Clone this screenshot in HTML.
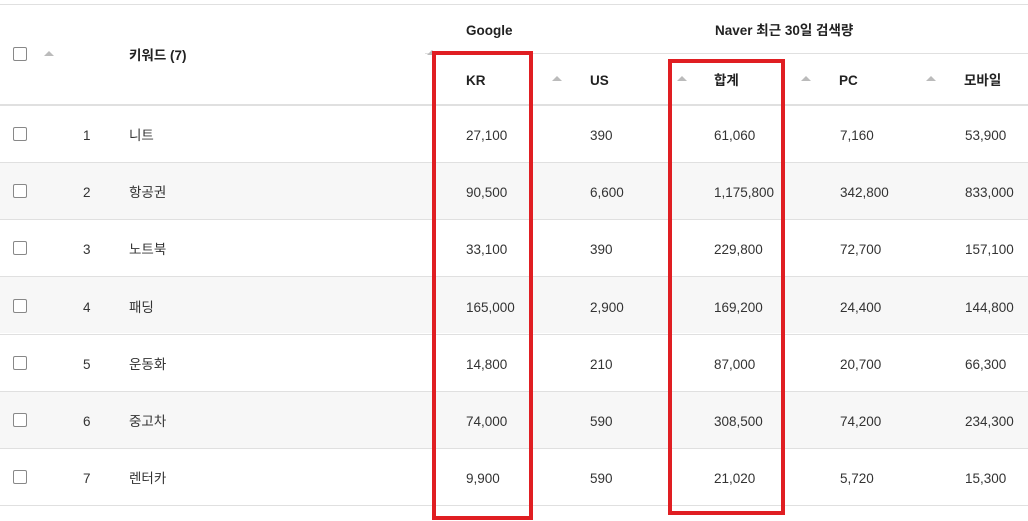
<!DOCTYPE html>
<html><head><meta charset="utf-8"><style>
body{margin:0;width:1028px;height:521px;background:#fff;position:relative;overflow:hidden;font-family:"Liberation Sans","Noto Sans CJK KR",sans-serif;color:#333;font-size:13.5px}
.a{position:absolute;white-space:nowrap;line-height:16px;height:16px;margin-top:1.5px}
.l{position:absolute;left:0;width:1028px;height:1px;background:#e0e0e0}
.sh{position:absolute;left:0;width:1028px;height:56px;background:#f7f7f7}
.cb{position:absolute;left:13px;width:12px;height:12px;border:1px solid #888;border-radius:2px;background:#fff}
.b{font-weight:bold;color:#222}
.ar{position:absolute;width:0;height:0;border-left:5px solid transparent;border-right:5px solid transparent;border-bottom:5px solid #bbb}
.red{position:absolute;border:4px solid #e01e22;box-sizing:border-box}
</style></head><body>
<div class="l" style="top:4px"></div>
<div class="l" style="top:53px;left:425px;width:603px"></div>
<div class="l" style="top:104px;height:2px"></div>
<div class="sh" style="top:163px"></div>
<div class="sh" style="top:277px"></div>
<div class="sh" style="top:392px"></div>
<div class="l" style="top:162px"></div>
<div class="l" style="top:219px"></div>
<div class="l" style="top:276px"></div>
<div class="l" style="top:334px"></div>
<div class="l" style="top:391px"></div>
<div class="l" style="top:448px"></div>
<div class="l" style="top:505px"></div>

<div class="cb" style="top:47px"></div>
<div class="ar" style="left:44px;top:51px"></div>
<div class="a b" style="left:129px;top:46px">키워드 (7)</div>
<div class="ar" style="left:427px;top:50px"></div>
<div class="a b" style="left:466px;top:21px">Google</div>
<div class="a b" style="left:715px;top:21px">Naver 최근 30일 검색량</div>
<div class="a b" style="left:466px;top:71px">KR</div>
<div class="ar" style="left:552px;top:76px"></div>
<div class="a b" style="left:590px;top:71px">US</div>
<div class="ar" style="left:677px;top:76px"></div>
<div class="a b" style="left:714px;top:71px">합계</div>
<div class="ar" style="left:801px;top:76px"></div>
<div class="a b" style="left:839px;top:71px">PC</div>
<div class="ar" style="left:926px;top:76px"></div>
<div class="a b" style="left:964px;top:71px">모바일</div>

<div class="cb" style="top:127px"></div><div class="a" style="left:83px;top:126px">1</div><div class="a" style="left:129px;top:126px">니트</div><div class="a" style="left:466px;top:126px">27,100</div><div class="a" style="left:590px;top:126px">390</div><div class="a" style="left:714px;top:126px">61,060</div><div class="a" style="left:840px;top:126px">7,160</div><div class="a" style="left:965px;top:126px">53,900</div>
<div class="cb" style="top:184px"></div><div class="a" style="left:83px;top:183px">2</div><div class="a" style="left:129px;top:183px">항공권</div><div class="a" style="left:466px;top:183px">90,500</div><div class="a" style="left:590px;top:183px">6,600</div><div class="a" style="left:714px;top:183px">1,175,800</div><div class="a" style="left:840px;top:183px">342,800</div><div class="a" style="left:965px;top:183px">833,000</div>
<div class="cb" style="top:241px"></div><div class="a" style="left:83px;top:240px">3</div><div class="a" style="left:129px;top:240px">노트북</div><div class="a" style="left:466px;top:240px">33,100</div><div class="a" style="left:590px;top:240px">390</div><div class="a" style="left:714px;top:240px">229,800</div><div class="a" style="left:840px;top:240px">72,700</div><div class="a" style="left:965px;top:240px">157,100</div>
<div class="cb" style="top:299px"></div><div class="a" style="left:83px;top:298px">4</div><div class="a" style="left:129px;top:298px">패딩</div><div class="a" style="left:466px;top:298px">165,000</div><div class="a" style="left:590px;top:298px">2,900</div><div class="a" style="left:714px;top:298px">169,200</div><div class="a" style="left:840px;top:298px">24,400</div><div class="a" style="left:965px;top:298px">144,800</div>
<div class="cb" style="top:356px"></div><div class="a" style="left:83px;top:355px">5</div><div class="a" style="left:129px;top:355px">운동화</div><div class="a" style="left:466px;top:355px">14,800</div><div class="a" style="left:590px;top:355px">210</div><div class="a" style="left:714px;top:355px">87,000</div><div class="a" style="left:840px;top:355px">20,700</div><div class="a" style="left:965px;top:355px">66,300</div>
<div class="cb" style="top:413px"></div><div class="a" style="left:83px;top:412px">6</div><div class="a" style="left:129px;top:412px">중고차</div><div class="a" style="left:466px;top:412px">74,000</div><div class="a" style="left:590px;top:412px">590</div><div class="a" style="left:714px;top:412px">308,500</div><div class="a" style="left:840px;top:412px">74,200</div><div class="a" style="left:965px;top:412px">234,300</div>
<div class="cb" style="top:470px"></div><div class="a" style="left:83px;top:469px">7</div><div class="a" style="left:129px;top:469px">렌터카</div><div class="a" style="left:466px;top:469px">9,900</div><div class="a" style="left:590px;top:469px">590</div><div class="a" style="left:714px;top:469px">21,020</div><div class="a" style="left:840px;top:469px">5,720</div><div class="a" style="left:965px;top:469px">15,300</div>

<div class="red" style="left:432px;top:51px;width:101px;height:469px"></div>
<div class="red" style="left:668px;top:59px;width:117px;height:456px"></div>
</body></html>
